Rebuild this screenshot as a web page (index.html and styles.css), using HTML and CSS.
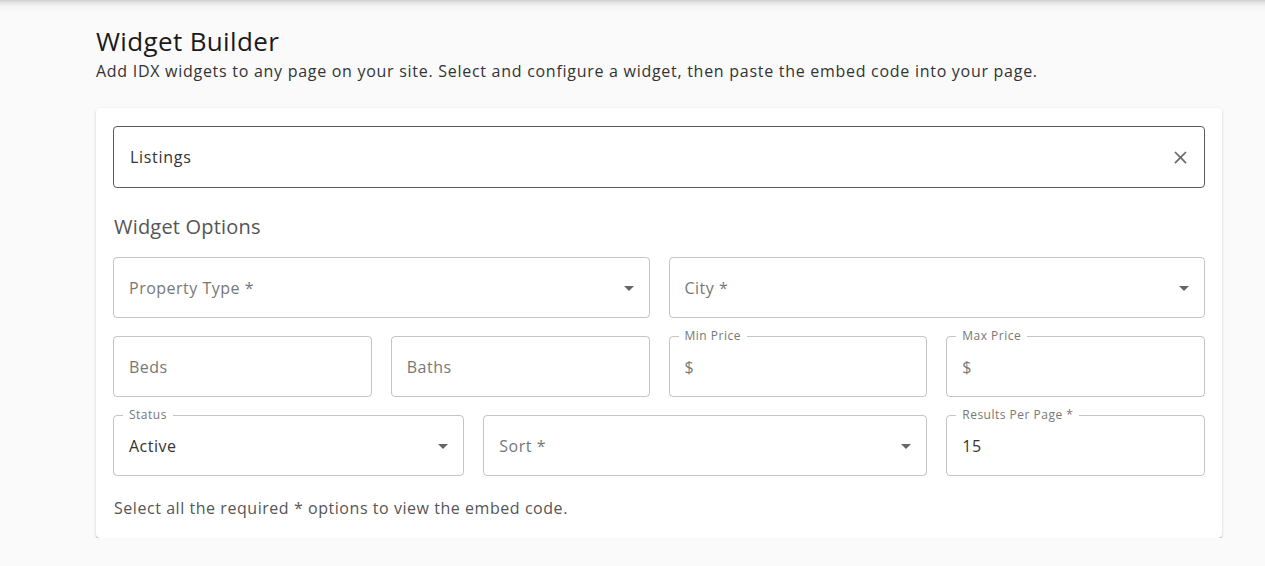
FILE: index.html
```html
<!DOCTYPE html>
<html lang="en">
<head>
<meta charset="utf-8">
<title>Widget Builder</title>
<link rel="stylesheet" href="styles.css">
</head>
<body>
<div class="topshade"></div>
<main class="page">
  <h1 class="title">Widget Builder</h1>
  <p class="subtitle">Add IDX widgets to any page on your site. Select and configure a widget, then paste the embed code into your page.</p>
  <section class="card">
    <div class="field field-dark field-tall">
      <span class="value">Listings</span>
      <svg class="icon-close" viewBox="0 0 24 24"><path d="M19 6.41L17.59 5 12 10.59 6.41 5 5 6.41 10.59 12 5 17.59 6.41 19 12 13.41 17.59 19 19 17.59 13.41 12z"/></svg>
    </div>
    <h2 class="section-title">Widget Options</h2>
    <div class="grid">
      <div class="field span-6"><span class="placeholder">Property Type *</span><svg class="icon-drop" viewBox="0 0 24 24"><path d="M7 10l5 5 5-5z"/></svg></div>
      <div class="field span-6"><span class="placeholder">City *</span><svg class="icon-drop" viewBox="0 0 24 24"><path d="M7 10l5 5 5-5z"/></svg></div>

      <div class="field span-3"><span class="placeholder">Beds</span></div>
      <div class="field span-3"><span class="placeholder">Baths</span></div>
      <div class="field span-3"><span class="legend">Min Price</span><span class="adorn">$</span></div>
      <div class="field span-3"><span class="legend">Max Price</span><span class="adorn">$</span></div>

      <div class="field span-4"><span class="legend">Status</span><span class="value">Active</span><svg class="icon-drop" viewBox="0 0 24 24"><path d="M7 10l5 5 5-5z"/></svg></div>
      <div class="field span-5"><span class="placeholder">Sort *</span><svg class="icon-drop" viewBox="0 0 24 24"><path d="M7 10l5 5 5-5z"/></svg></div>
      <div class="field span-3"><span class="legend">Results Per Page *</span><span class="value">15</span></div>
    </div>
    <p class="hint">Select all the required * options to view the embed code.</p>
  </section>
</main>
</body>
</html>
```

FILE: styles.css
```css
* { box-sizing: border-box; }

html, body {
  margin: 0;
  padding: 0;
  background: #fafafa;
  font-family: "Open Sans", "Lato", sans-serif;
  color: rgba(0,0,0,0.87);
}

.topshade {
  height: 12px;
  background: linear-gradient(to bottom, #cfcfcf 0px, #e6e6e6 3px, #f3f3f3 6px, #fafafa 12px);
}

.page {
  margin-left: 96px;
  width: 1126px;
  padding-top: 13px;
}

.title {
  margin: 0;
  font-size: 26px;
  line-height: 32px;
  font-weight: 400;
  color: #1a1a1a;
  letter-spacing: 0.35px;
}

.subtitle {
  margin: 2px 0 0;
  font-size: 16px;
  line-height: 24px;
  color: #333;
  letter-spacing: 0.72px;
}

.card {
  margin-top: 25px;
  background: #fff;
  border-radius: 4px;
  box-shadow: 0 2px 1px -1px rgba(0,0,0,0.25), 0 1px 1px 0 rgba(0,0,0,0.16), 0 1px 3px 0 rgba(0,0,0,0.14);
  padding: 18px 17px 18px 17px;
}

.field {
  position: relative;
  height: 61px;
  border: 1px solid rgba(0,0,0,0.23);
  border-radius: 4px;
  display: flex;
  align-items: center;
  padding: 0 15px;
  font-size: 16px;
  letter-spacing: 0.5px;
}

.field-dark {
  border-color: #5a5a5a;
}

.field-tall {
  height: 62px;
  padding-left: 16px;
  letter-spacing: 0.7px;
}

.value { color: #333; }
.placeholder { color: #777; }
.adorn { color: #777; }

.legend {
  position: absolute;
  top: -9px;
  left: 9px;
  padding: 0 6px;
  background: #fff;
  font-size: 12px;
  line-height: 16px;
  color: #777;
  letter-spacing: 0.5px;
}

.icon-close {
  position: absolute;
  right: 13px;
  top: 20px;
  width: 21px;
  height: 21px;
  fill: #6b6b6b;
}

.icon-drop {
  position: absolute;
  right: 8px;
  top: 18px;
  width: 24px;
  height: 24px;
  fill: #666;
}

.section-title {
  margin: 25px 0 16px 1px;
  font-size: 20px;
  line-height: 28px;
  font-weight: 400;
  color: #555;
  letter-spacing: 0.2px;
}

.grid {
  display: grid;
  grid-template-columns: repeat(12, 1fr);
  column-gap: 19px;
  row-gap: 18px;
}

.span-3 { grid-column: span 3; }
.span-4 { grid-column: span 4; }
.span-5 { grid-column: span 5; }
.span-6 { grid-column: span 6; }

.hint {
  margin: 20px 0 0 1px;
  font-size: 16px;
  line-height: 24px;
  color: #555;
  letter-spacing: 0.55px;
}
```
